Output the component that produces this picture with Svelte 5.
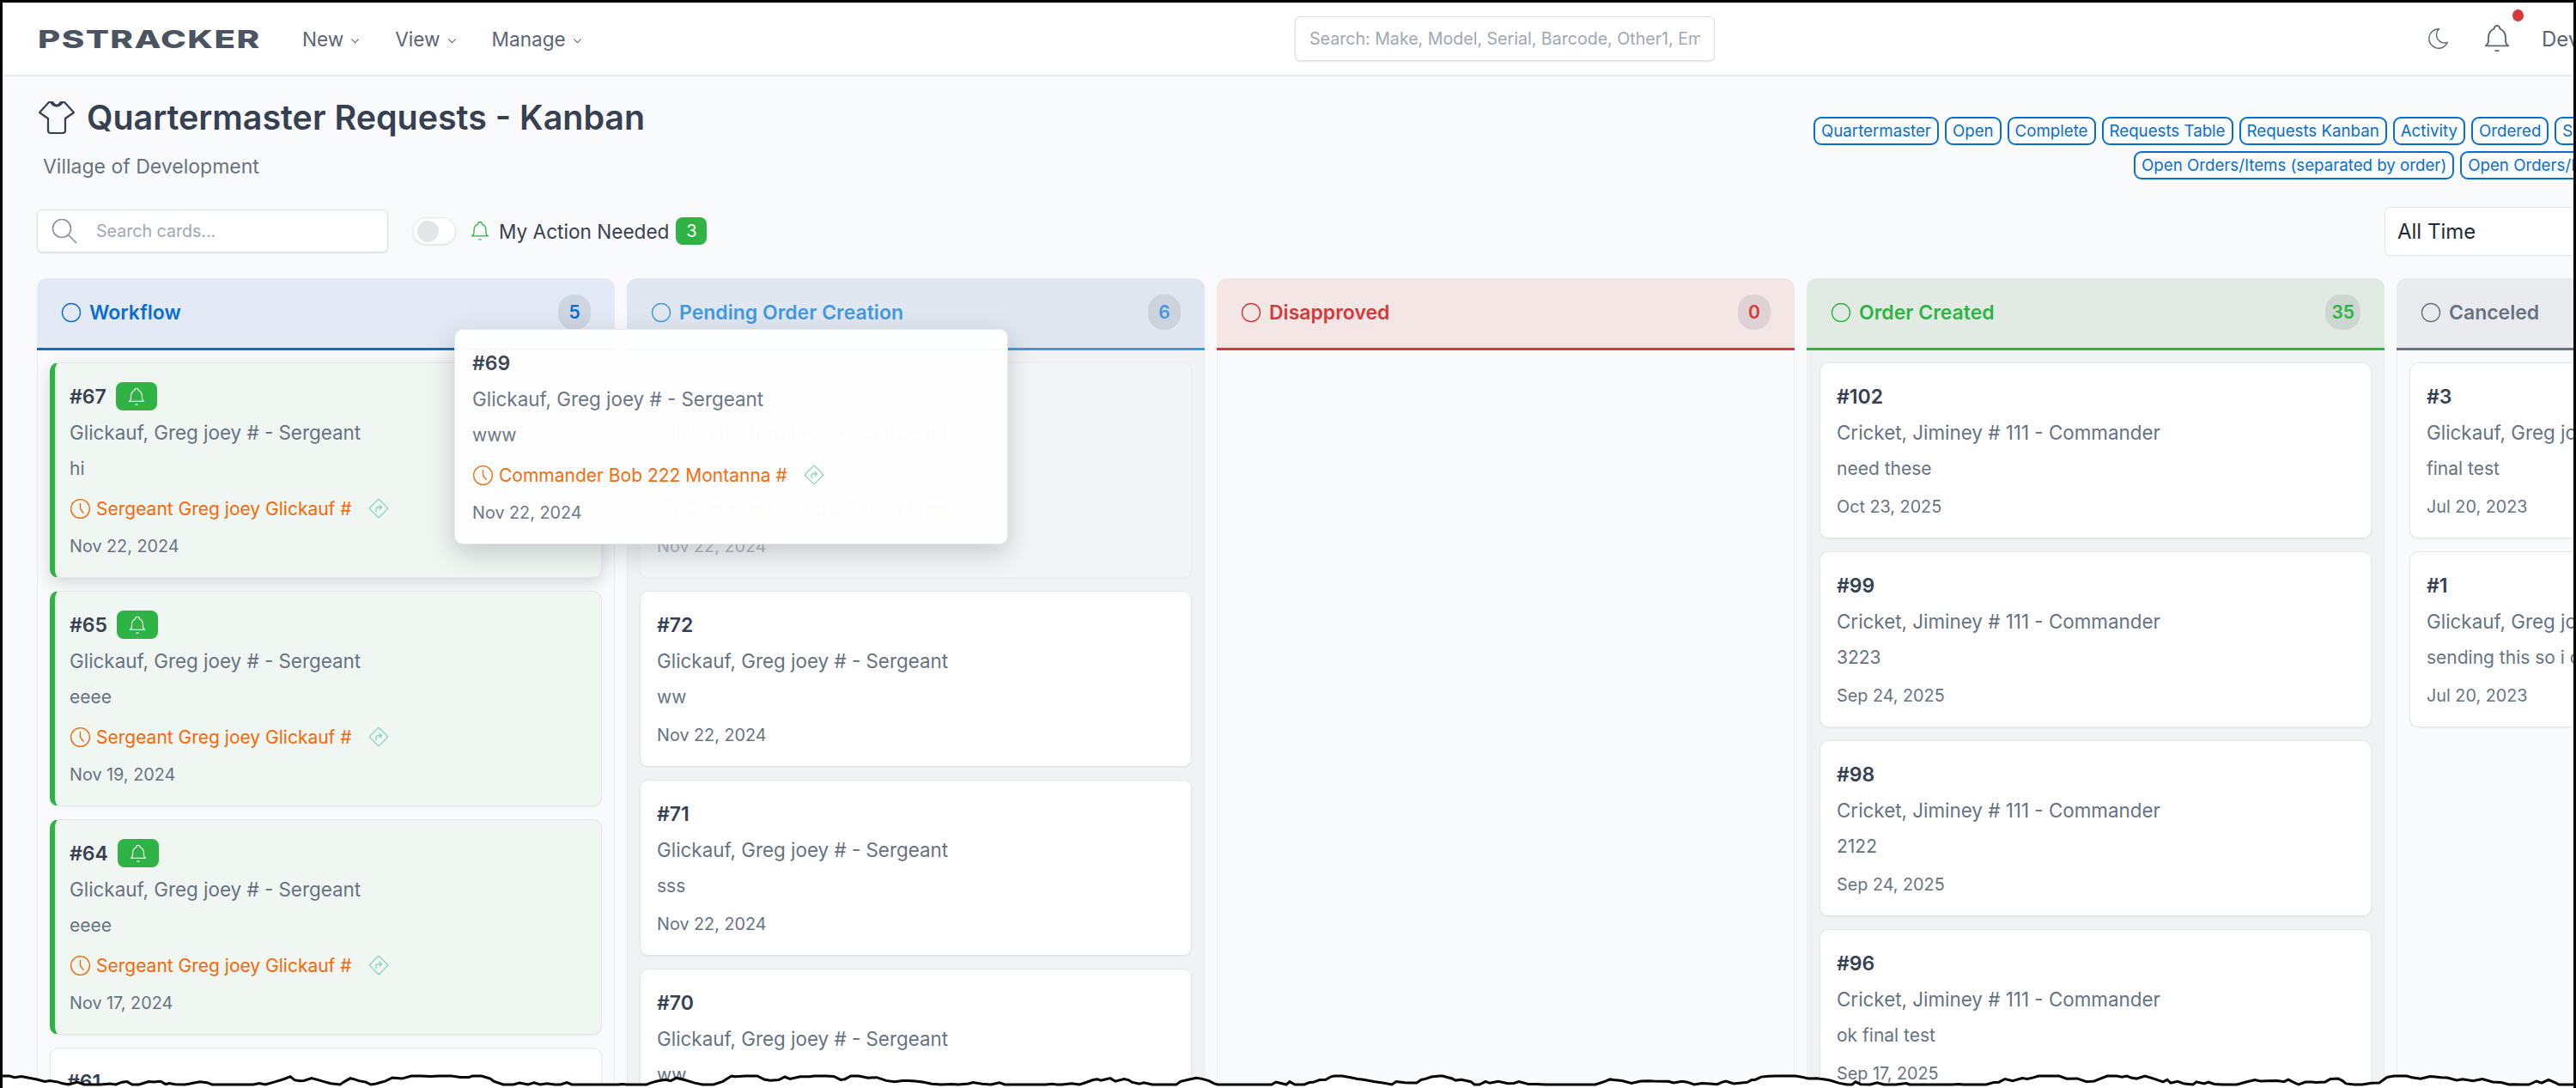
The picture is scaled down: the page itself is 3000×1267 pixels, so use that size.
<script>
  const navItems = ['New', 'View', 'Manage'];
  const tagsTop = ['Quartermaster', 'Open', 'Complete', 'Requests Table', 'Requests Kanban', 'Activity', 'Ordered', 'Settings'];
  const tagsBottom = ['Open Orders/Items (separated by order)', 'Open Orders/Items (combined)'];

  const greg = 'Glickauf, Greg joey # - Sergeant';
  const jim = 'Cricket, Jiminey # 111 - Commander';
  const sgt = 'Sergeant Greg joey Glickauf #';
  const bob = 'Commander Bob 222 Montanna #';

  const columns = [
    { title: 'Workflow', count: 5, tone: 'blue', cards: [
      { id: 67, name: greg, note: 'hi', who: sgt, date: 'Nov 22, 2024', action: true, lifted: true },
      { id: 65, name: greg, note: 'eeee', who: sgt, date: 'Nov 19, 2024', action: true },
      { id: 64, name: greg, note: 'eeee', who: sgt, date: 'Nov 17, 2024', action: true },
      { id: 61, name: greg, note: 'www', date: 'Nov 10, 2024' }
    ] },
    { title: 'Pending Order Creation', count: 6, tone: 'azure', shaded: true, cards: [
      { id: 69, name: greg, note: 'www', who: bob, date: 'Nov 22, 2024', ghost: true },
      { id: 72, name: greg, note: 'ww', date: 'Nov 22, 2024' },
      { id: 71, name: greg, note: 'sss', date: 'Nov 22, 2024' },
      { id: 70, name: greg, note: 'ww', date: 'Nov 22, 2024' }
    ] },
    { title: 'Disapproved', count: 0, tone: 'red', cards: [] },
    { title: 'Order Created', count: 35, tone: 'green', shaded: true, cards: [
      { id: 102, name: jim, note: 'need these', date: 'Oct 23, 2025' },
      { id: 99, name: jim, note: '3223', date: 'Sep 24, 2025' },
      { id: 98, name: jim, note: '2122', date: 'Sep 24, 2025' },
      { id: 96, name: jim, note: 'ok final test', date: 'Sep 17, 2025' }
    ] },
    { title: 'Canceled', count: 2, tone: 'gray', cards: [
      { id: 3, name: greg, note: 'final test', date: 'Jul 20, 2023' },
      { id: 1, name: greg, note: 'sending this so i can test', date: 'Jul 20, 2023' }
    ] }
  ];

  const dragged = columns[1].cards[0];

  // torn paper edge along the bottom of the capture
  let seed = 7;
  function next() {
    seed = (seed * 16807) % 2147483647;
    return seed / 2147483647;
  }
  const tornPoints = [];
  let y = 1257;
  for (let x = 0; x <= 3000; x += 4 + Math.round(next() * 8)) {
    y = Math.max(1253, Math.min(1263, y + (next() - 0.5) * 8));
    tornPoints.push(x + ',' + y.toFixed(1));
  }
  tornPoints.push('3000,' + y.toFixed(1));
  const tornLine = tornPoints.join(' ');
  const tornFill = tornLine + ' 3000,1267 0,1267';
</script>

{#snippet bell()}
  <svg class="icon" viewBox="0 0 24 24"><path d="M10 5a2 2 0 1 1 4 0a7 7 0 0 1 4 6v3a4 4 0 0 0 2 3h-16a4 4 0 0 0 2 -3v-3a7 7 0 0 1 4 -6" /><path d="M11 20.5h2" /></svg>
{/snippet}

{#snippet card(c)}
  <div class="card-head">
    <span class="card-id">#{c.id}</span>
    {#if c.action}
      <span class="action-badge">{@render bell()}</span>
    {/if}
  </div>
  <div class="card-name">{c.name}</div>
  <div class="card-note">{c.note}</div>
  {#if c.who}
    <div class="card-who">
      <svg class="icon clock" viewBox="0 0 24 24"><circle cx="12" cy="12" r="9" /><path d="M12 7v5l3 4" /></svg>
      <span>{c.who}</span>
      <svg class="icon sign" viewBox="0 0 24 24"><path d="M3.32 12.774l7.906 7.905c.427 .428 1.12 .428 1.548 0l7.905 -7.905a1.095 1.095 0 0 0 0 -1.548l-7.905 -7.905a1.095 1.095 0 0 0 -1.548 0l-7.905 7.905a1.095 1.095 0 0 0 0 1.548z" /><path d="M9.5 15v-3c0 -.6 .4 -1 1 -1h4.5" /><path d="M13 9l2 2l-2 2" /></svg>
    </div>
  {/if}
  <div class="card-date">{c.date}</div>
{/snippet}

<div class="frame">
  <div class="inner">
    <header class="navbar">
      <div class="logo">PSTRACKER</div>
      <nav class="nav">
        {#each navItems as item}
          <span class="nav-item">
            {item}
            <svg class="icon chev" viewBox="0 0 24 24"><path d="M5 9l7 7l7 -7" /></svg>
          </span>
        {/each}
      </nav>
      <input class="global-search" placeholder="Search: Make, Model, Serial, Barcode, Other1, Employee" />
      <div class="nav-right">
        <svg class="icon moon" viewBox="0 0 24 24"><path d="M12 3c.132 0 .263 0 .393 0a7.5 7.5 0 0 0 7.92 12.446a9 9 0 1 1 -8.313 -12.454z" /></svg>
        <span class="nav-bell">
          {@render bell()}
          <i class="dot"></i>
        </span>
        <span class="user">Developer</span>
      </div>
    </header>

    <main class="main">
      <section class="page-head">
        <div class="title-block">
          <h1>
            <svg class="shirt" viewBox="0 0 46 40"><path d="M13 21l-10 -7l11 -12h4q5 7 10 0h4l11 12l-10 7v14q0 3 -3 3h-14q-3 0 -3 -3z" /><path d="M16 2q7 9 14 0" /></svg>
            Quartermaster Requests - Kanban
          </h1>
          <div class="subtitle">Village of Development</div>
        </div>
        <div class="tags">
          <div class="tag-row">
            {#each tagsTop as t}<span class="tag">{t}</span>{/each}
          </div>
          <div class="tag-row second">
            {#each tagsBottom as t}<span class="tag">{t}</span>{/each}
          </div>
        </div>
      </section>

      <section class="controls">
        <div class="card-search">
          <svg class="icon" viewBox="0 0 24 24"><path d="M3 10a7 7 0 1 0 14 0a7 7 0 1 0 -14 0" /><path d="M21 21l-6 -6" /></svg>
          <input placeholder="Search cards..." />
        </div>
        <span class="toggle"><i></i></span>
        <span class="toggle-bell">{@render bell()}</span>
        <span class="toggle-label">My Action Needed</span>
        <span class="toggle-count">3</span>
        <div class="range">All Time</div>
      </section>

      <section class="board">
        {#each columns as col}
          <div class="column {col.tone}" class:shaded={col.shaded}>
            <div class="col-head">
              <svg class="col-ring" viewBox="0 0 24 24"><circle cx="12" cy="12" r="10.5" /></svg>
              <span class="col-title">{col.title}</span>
              <span class="col-count">{col.count}</span>
            </div>
            <div class="col-body">
              {#each col.cards as c}
                <article class="card" class:action={c.action} class:lifted={c.lifted} class:ghost={c.ghost}>
                  {@render card(c)}
                </article>
              {/each}
            </div>
          </div>
        {/each}
      </section>
    </main>

    <article class="card floating">
      {@render card(dragged)}
    </article>
  </div>

  <svg class="torn" viewBox="0 0 3000 1267">
    <polygon points={tornFill} fill="#fff" />
    <polyline points={tornLine} fill="none" stroke="#000" stroke-width="3" />
  </svg>
</div>

<style>
  :global(body) {
    margin: 0;
    background: #fff;
  }
  .frame {
    position: relative;
    box-sizing: border-box;
    width: 3000px;
    height: 1267px;
    border: 3px solid #000;
    border-bottom: 0;
    overflow: hidden;
    font-family: Inter, "Liberation Sans", sans-serif;
    color: #354052;
  }
  .inner {
    position: relative;
    height: 100%;
    overflow: hidden;
    background: #f9fafb;
  }
  .icon {
    fill: none;
    stroke: currentColor;
    stroke-width: 1.1;
    stroke-linecap: round;
    stroke-linejoin: round;
  }

  .navbar {
    display: flex;
    align-items: center;
    box-sizing: border-box;
    height: 86px;
    padding-left: 41px;
    background: #fff;
    border-bottom: 2px solid #e8eaed;
  }
  .logo {
    flex: 0 0 308px;
    font-size: 29px;
    font-weight: 800;
    line-height: 1;
    color: #4a5561;
    letter-spacing: 1px;
    transform: scaleX(1.39);
    transform-origin: left center;
  }
  .nav {
    display: flex;
    flex: 0 0 1156px;
    gap: 40px;
  }
  .nav-item {
    display: flex;
    align-items: center;
    gap: 7px;
    font-size: 22.6px;
    color: #5b6573;
  }
  .chev {
    width: 13px;
    height: 13px;
    margin-top: 4px;
    stroke-width: 2;
  }
  .global-search {
    flex: 0 0 489px;
    box-sizing: border-box;
    height: 52px;
    padding: 0 16px;
    background: #fff;
    border: 1px solid #dfe2e7;
    border-radius: 6px;
    box-shadow: 0 1px 2px rgba(30, 41, 59, .12);
    font: 19.6px Inter, sans-serif;
  }
  .global-search::placeholder,
  .card-search input::placeholder {
    color: #a0a7b3;
    opacity: 1;
  }
  .nav-right {
    display: flex;
    align-items: center;
    margin-left: 828px;
    flex-shrink: 0;
    color: #5b6573;
  }
  .moon {
    width: 30px;
    height: 30px;
  }
  .nav-bell {
    position: relative;
    display: flex;
    margin-left: 33px;
  }
  .nav-bell .icon {
    width: 40px;
    height: 40px;
  }
  .dot {
    position: absolute;
    top: -14px;
    left: 38px;
    width: 13px;
    height: 14px;
    border-radius: 50%;
    background: #d63939;
  }
  .user {
    margin-left: 32px;
    font-size: 24px;
  }

  .main {
    padding: 22px 0 0 40px;
  }
  .page-head {
    display: flex;
    height: 125px;
  }
  .title-block {
    flex: 0 0 2069px;
  }
  h1 {
    display: flex;
    align-items: center;
    gap: 12px;
    margin: 2px 0 0;
    font-size: 39.4px;
    line-height: 48px;
    font-weight: 600;
    color: #354052;
  }
  .shirt {
    width: 46px;
    height: 40px;
    fill: none;
    stroke: #354052;
    stroke-width: 2.2;
    stroke-linejoin: round;
    stroke-linecap: round;
  }
  .subtitle {
    margin: 19px 0 0 7px;
    font-size: 23px;
    line-height: 28px;
    color: #667382;
  }
  .tags {
    margin-top: 25px;
  }
  .tag-row {
    display: flex;
    gap: 7px;
    width: 1200px;
  }
  .tag-row.second {
    margin: 7px 0 0 373px;
  }
  .tag {
    box-sizing: border-box;
    height: 33px;
    padding: 0 7px;
    border: 2px solid #0a6ed1;
    border-radius: 9px;
    background: #fbfcfe;
    color: #0a6ed1;
    font-size: 18.7px;
    line-height: 29px;
    white-space: nowrap;
  }

  .controls {
    display: flex;
    align-items: center;
    width: 2994px;
    height: 66px;
  }
  .card-search {
    display: flex;
    align-items: center;
    box-sizing: border-box;
    width: 409px;
    height: 50px;
    padding-left: 13px;
    background: #fff;
    border: 1px solid #dfe2e7;
    border-radius: 6px;
    box-shadow: 0 1px 2px rgba(30, 41, 59, .12);
    color: #8b93a0;
  }
  .card-search .icon {
    width: 36px;
    height: 36px;
  }
  .card-search input {
    margin-left: 17px;
    border: 0;
    outline: 0;
    width: 300px;
    background: none;
    font: 19.6px Inter, sans-serif;
  }
  .toggle {
    display: flex;
    align-items: center;
    box-sizing: border-box;
    width: 51px;
    height: 32px;
    margin-left: 28px;
    padding-left: 5px;
    background: #fff;
    border: 1px solid #e6e7ea;
    border-radius: 16px;
    box-shadow: 0 1px 2px rgba(30, 41, 59, .1);
  }
  .toggle i {
    width: 25px;
    height: 25px;
    border-radius: 50%;
    background: #e4e5e9;
  }
  .toggle-bell {
    display: flex;
    margin-left: 14px;
    color: #2fb344;
  }
  .toggle-bell .icon {
    width: 28px;
    height: 28px;
  }
  .toggle-label {
    margin-left: 8px;
    font-size: 22.6px;
  }
  .toggle-count {
    width: 36px;
    height: 32px;
    margin-left: 8px;
    border-radius: 8px;
    background: #2fb344;
    color: #fff;
    font-size: 20px;
    line-height: 32px;
    text-align: center;
  }
  .range {
    box-sizing: border-box;
    width: 260px;
    height: 57px;
    margin-left: auto;
    padding-left: 14px;
    background: #fff;
    border: 1px solid #e4e6ea;
    border-radius: 6px;
    font-size: 24px;
    line-height: 55px;
    color: #1f2937;
  }

  .board {
    display: flex;
    gap: 14px;
    margin-top: 22px;
  }
  .column {
    flex: 0 0 673px;
    --tone: #0a6ed1;
    --tint: #e3eaf5;
  }
  .column.azure { --tone: #4299e1; --tint: #e0e7f0; }
  .column.red { --tone: #d63939; --tint: #f5e6e6; }
  .column.green { --tone: #2fb344; --tint: #e1ebe3; }
  .column.gray { --tone: #667382; --tint: #e9ebef; }
  .col-head {
    display: flex;
    align-items: center;
    box-sizing: border-box;
    height: 84px;
    padding: 0 28px 2px 28px;
    background: var(--tint);
    border-bottom: 3px solid var(--tone);
    border-radius: 12px 12px 0 0;
    color: var(--tone);
  }
  .col-ring {
    width: 24px;
    height: 24px;
    fill: none;
    stroke: currentColor;
    stroke-width: 1.4;
  }
  .col-title {
    margin-left: 9px;
    font-size: 23px;
    font-weight: 600;
  }
  .col-count {
    min-width: 38px;
    margin-left: auto;
    padding: 0 7px;
    box-sizing: border-box;
    height: 41px;
    border-radius: 18px;
    background: rgba(30, 41, 59, .1);
    font-size: 21px;
    font-weight: 600;
    line-height: 41px;
    text-align: center;
  }
  .col-body {
    display: flex;
    flex-direction: column;
    gap: 15px;
    box-sizing: border-box;
    height: 860px;
    padding: 14px 14px 0;
    background: #f9fafb;
    border: solid #ebedf0;
    border-width: 0 1px;
  }
  .shaded .col-body {
    background: #f1f2f4;
  }

  .card {
    flex-shrink: 0;
    box-sizing: border-box;
    padding: 22px 19px 22px;
    background: #fff;
    border: 1px solid #e6e7ea;
    border-radius: 10px;
    box-shadow: 0 1px 2px rgba(30, 41, 59, .06);
  }
  .card.action {
    background: #f0f6f2;
    border-left: 6px solid #2fb344;
    padding-left: 17px;
  }
  .card.lifted {
    box-shadow: 0 6px 18px rgba(30, 41, 59, .16);
  }
  .card.ghost {
    opacity: .45;
    background: #f9f9f9;
  }
  .floating {
    position: absolute;
    top: 380px;
    left: 526px;
    width: 645px;
    padding-left: 20px;
    background: #fff;
    opacity: .96;
    box-shadow: 0 10px 30px rgba(30, 41, 59, .22);
  }
  .card-head {
    display: flex;
    align-items: center;
    gap: 11px;
    height: 33px;
  }
  .card-id {
    font-size: 23px;
    font-weight: 600;
    color: #354052;
  }
  .action-badge {
    display: flex;
    align-items: center;
    justify-content: center;
    width: 48px;
    height: 33px;
    border-radius: 8px;
    background: #2fb344;
    color: #fff;
  }
  .action-badge .icon {
    width: 26px;
    height: 26px;
  }
  .card-name {
    margin-top: 12px;
    font-size: 22.4px;
    line-height: 28px;
    color: #667382;
  }
  .card-note {
    margin-top: 14px;
    font-size: 21px;
    line-height: 28px;
    color: #667382;
  }
  .card-who {
    display: flex;
    align-items: center;
    height: 28px;
    margin-top: 18px;
    font-size: 21px;
    color: #f76707;
  }
  .clock {
    width: 29px;
    height: 29px;
    margin: 0 4px 0 -2px;
  }
  .sign {
    width: 28px;
    height: 28px;
    margin-left: 17px;
    color: #7fd1b0;
  }
  .card-date {
    margin-top: 16px;
    font-size: 19.8px;
    line-height: 28px;
    color: #667382;
  }

  .torn {
    position: absolute;
    top: -3px;
    left: -3px;
    width: 3000px;
    height: 1267px;
  }
</style>
